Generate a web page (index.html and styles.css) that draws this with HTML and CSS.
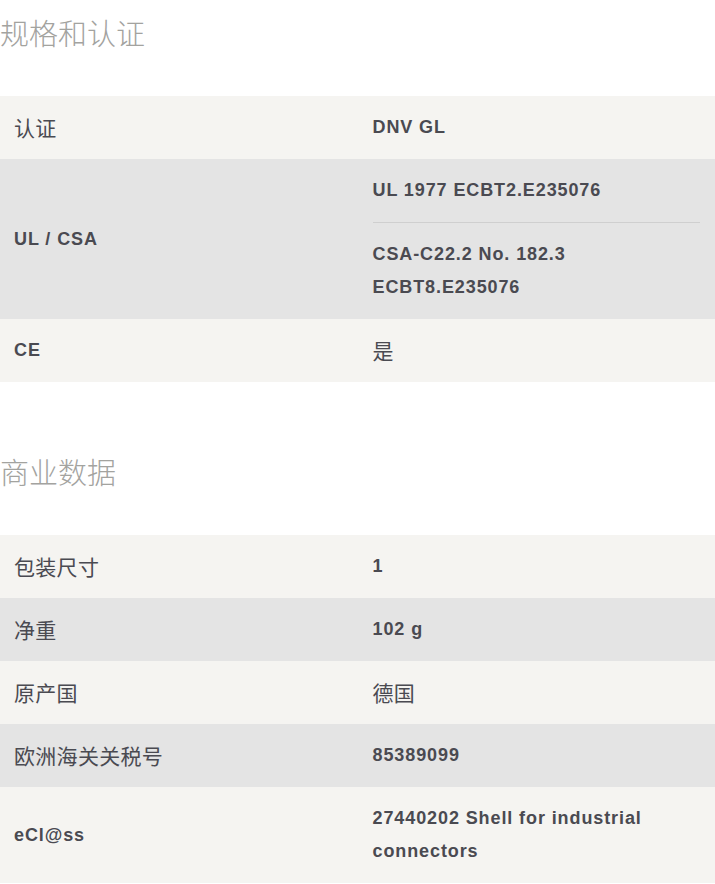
FILE: index.html
```html
<!DOCTYPE html>
<html lang="zh">
<head>
<meta charset="utf-8">
<link rel="stylesheet" href="styles.css">
</head>
<body>
<section class="section first">
  <h2 class="title">规格和认证</h2>
  <div class="table">
    <div class="row">
      <div class="cell label cjk">认证</div>
      <div class="cell value">DNV GL</div>
    </div>
    <div class="row">
      <div class="cell label">UL / CSA</div>
      <div class="cell value">
        <ul class="list">
          <li class="item">UL 1977 ECBT2.E235076</li>
          <li class="item">CSA-C22.2 No. 182.3 ECBT8.E235076</li>
        </ul>
      </div>
    </div>
    <div class="row">
      <div class="cell label">CE</div>
      <div class="cell value cjk">是</div>
    </div>
  </div>
</section>
<section class="section second">
  <h2 class="title">商业数据</h2>
  <div class="table">
    <div class="row">
      <div class="cell label cjk">包装尺寸</div>
      <div class="cell value">1</div>
    </div>
    <div class="row">
      <div class="cell label cjk">净重</div>
      <div class="cell value">102 g</div>
    </div>
    <div class="row">
      <div class="cell label cjk">原产国</div>
      <div class="cell value cjk">德国</div>
    </div>
    <div class="row">
      <div class="cell label cjk">欧洲海关关税号</div>
      <div class="cell value">85389099</div>
    </div>
    <div class="row">
      <div class="cell label">eCl@ss</div>
      <div class="cell value">27440202 Shell for industrial connectors</div>
    </div>
  </div>
</section>
</body>
</html>
```
FILE: styles.css
```css
html, body {
  margin: 0;
  padding: 0;
  background: #ffffff;
}
body {
  font-family: "Liberation Sans", "Noto Sans CJK SC", sans-serif;
  color: #4a4a51;
}
.section.first {
  padding-top: 12px;
}
.section.second {
  margin-top: 69px;
}
.title {
  margin: 0 0 44px 0;
  font-family: "Noto Sans CJK SC", sans-serif;
  font-weight: 300;
  font-size: 29px;
  line-height: 40px;
  color: #a3a39f;
}
.table {
  display: flex;
  flex-direction: column;
}
.row {
  display: grid;
  grid-template-columns: 1fr 1fr;
  background: #f5f4f1;
}
.row:nth-child(even) {
  background: #e4e4e4;
}
.cell {
  padding: 15px 15px 15px 14px;
  font-size: 18px;
  font-weight: 700;
  letter-spacing: 0.9px;
  line-height: 33px;
  display: flex;
  flex-direction: column;
  justify-content: center;
}
.cell.value {
  padding-left: 15px;
}
.cell.cjk {
  font-family: "Noto Sans CJK SC", sans-serif;
  font-weight: 400;
  font-size: 21px;
  letter-spacing: 0.3px;
}
.list {
  list-style: none;
  margin: 0;
  padding: 0;
}
.item + .item {
  border-top: 1px solid #cfcfcf;
  padding-top: 15px;
  margin-top: 15px;
}
```
